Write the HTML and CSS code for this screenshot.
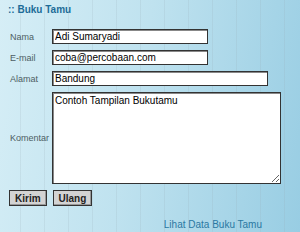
FILE: index.html
```html
<!DOCTYPE html>
<html lang="id">
<head>
  <meta charset="UTF-8">
  <title>Buku Tamu</title>
  <link rel="stylesheet" href="styles.css">
</head>
<body>
  <div class="page">
    <h1 class="title">:: Buku Tamu</h1>

    <form class="guest-form">
      <label for="nama">Nama</label>
      <input type="text" id="nama" class="field short" value="Adi Sumaryadi">

      <label for="email">E-mail</label>
      <input type="text" id="email" class="field short" value="coba@percobaan.com">

      <label for="alamat">Alamat</label>
      <input type="text" id="alamat" class="field mid" value="Bandung">

      <label for="komentar">Komentar</label>
      <textarea id="komentar" class="field wide">Contoh Tampilan Bukutamu</textarea>

      <div class="buttons">
        <button type="submit" class="btn">Kirim</button>
        <button type="reset" class="btn">Ulang</button>
      </div>
    </form>

    <div class="footer">
      <a href="#" class="link">Lihat Data Buku Tamu</a>
    </div>
  </div>
</body>
</html>
```

FILE: styles.css
```css
html, body {
  margin: 0;
  height: 100%;
}
body {
  font-family: "Liberation Sans", Arial, sans-serif;
  background-color: #b5dcec;
  background-image:
    repeating-linear-gradient(90deg, rgba(255,255,255,0) 0 20px, rgba(150,170,180,0.18) 20px 21px, rgba(255,255,255,0) 21px 24px),
    linear-gradient(100deg, #d6eef6 0%, #bfe2ef 45%, #98cde3 100%);
}
.page {
  padding: 4px 0 0 0;
}
.title {
  margin: 0 0 0 8px;
  font-size: 10px;
  font-weight: bold;
  color: #1d6c98;
  line-height: 12px;
}
.guest-form {
  display: grid;
  grid-template-columns: 42px auto;
  column-gap: 0;
  row-gap: 6px;
  align-items: center;
  justify-items: start;
  margin: 13px 0 0 10px;
}
.guest-form label {
  font-size: 9px;
  color: #4d5d63;
}
.field {
  box-sizing: border-box;
  margin: 0;
  font-family: "Liberation Sans", Arial, sans-serif;
  font-size: 10px;
  color: #000;
  background: #fff;
  border: 1px solid #333;
  box-shadow: inset 1px 1px 0 #888;
  padding: 1px 2px;
  height: 15px;
}
.short {
  width: 156px;
}
.mid {
  width: 216px;
}
.wide {
  width: 229px;
  height: 92px;
  resize: both;
  padding: 2px 2px;
}
.buttons {
  grid-column: 1 / 3;
  display: flex;
  gap: 6px;
  margin: 0 0 0 -1px;
}
.btn {
  font-family: "Liberation Sans", Arial, sans-serif;
  font-size: 10px;
  font-weight: bold;
  color: #222;
  background: #d3d3d3;
  border: 1px solid #333;
  box-shadow: inset -1px -1px 0 #999;
  padding: 0 5px;
  height: 16px;
}
.footer {
  display: flex;
  justify-content: flex-end;
  padding: 13px 38px 0 0;
}
.link {
  font-size: 10px;
  color: #2a78a2;
  text-decoration: none;
}
```
